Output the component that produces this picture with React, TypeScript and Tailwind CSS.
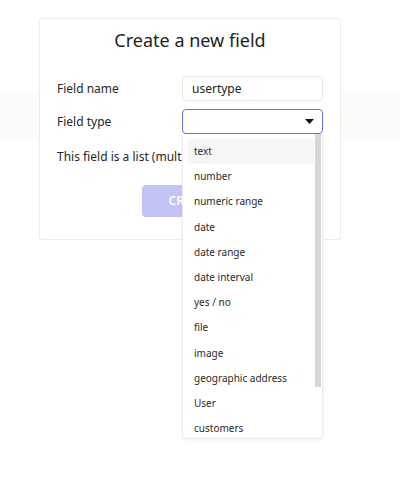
import React from "react";

const TYPES = [
  "text",
  "number",
  "numeric range",
  "date",
  "date range",
  "date interval",
  "yes / no",
  "file",
  "image",
  "geographic address",
  "User",
  "customers",
];

function Caret() {
  return (
    <svg width="9" height="5" viewBox="0 0 9 5">
      <path d="M0 0h9L4.5 5z" fill="#111" />
    </svg>
  );
}

export default function App() {
  return (
    <div
      className="relative h-[500px] w-[400px] overflow-hidden bg-white"
      style={{ fontFamily: '"Noto Sans", "Open Sans", sans-serif' }}
    >
      {/* faint band behind the card */}
      <div className="absolute left-0 right-0 top-[90px] h-[48px] bg-[#fcfcfc]" />

      <div className="relative px-[39px] pt-[18px]">
        <div className="h-[222px] w-[302px] rounded-[3px] border border-[#ececec] bg-white px-[17px] pt-[7px]">
          <h1 className="text-center text-[18px] leading-[28px] text-[#1f1f1f]">
            Create a new field
          </h1>

          <div className="mt-[22px] flex items-center justify-between">
            <span className="text-[12px] text-[#262626]">Field name</span>
            <div className="flex h-[25px] w-[141px] items-center rounded-[4px] border border-[#e6e6e6] px-[9px] text-[12px] text-[#222]">
              usertype
            </div>
          </div>

          <div className="mt-[8px] flex items-center justify-between">
            <span className="text-[12px] text-[#262626]">Field type</span>
            <div className="relative">
              <div className="flex h-[25px] w-[141px] items-center justify-end rounded-[4px] border border-[#6f6fe6] pr-[8px]">
                <Caret />
              </div>

              <div className="absolute left-0 top-[25px] z-10 h-[305px] w-[141px] overflow-hidden rounded-b-[3px] border border-t-0 border-[#ececec] bg-white shadow-[0_1px_3px_rgba(0,0,0,0.06)]">
                <div className="absolute right-[1px] top-0 h-[253px] w-[6px] bg-[#d6d6d6]" />
                <ul className="pl-[5px] pr-[8px] pt-[5px]">
                  {TYPES.map((t, i) => (
                    <li
                      key={t}
                      className={
                        "flex h-[25.2px] items-center px-[6px] text-[10px] text-[#2a2a2a] " +
                        (i === 0 ? "bg-[#f6f6f6]" : "")
                      }
                    >
                      {t}
                    </li>
                  ))}
                </ul>
              </div>
            </div>
          </div>

          <p className="mt-[14px] text-[12px] text-[#262626]">
            This field is a list (multiple entries)
          </p>

          <div className="mt-[19px] flex justify-center">
            <button className="h-[32px] w-[96px] rounded-[4px] bg-[#c3c3f6] text-[12px] font-semibold text-white">
              CREATE
            </button>
          </div>
        </div>
      </div>
    </div>
  );
}
